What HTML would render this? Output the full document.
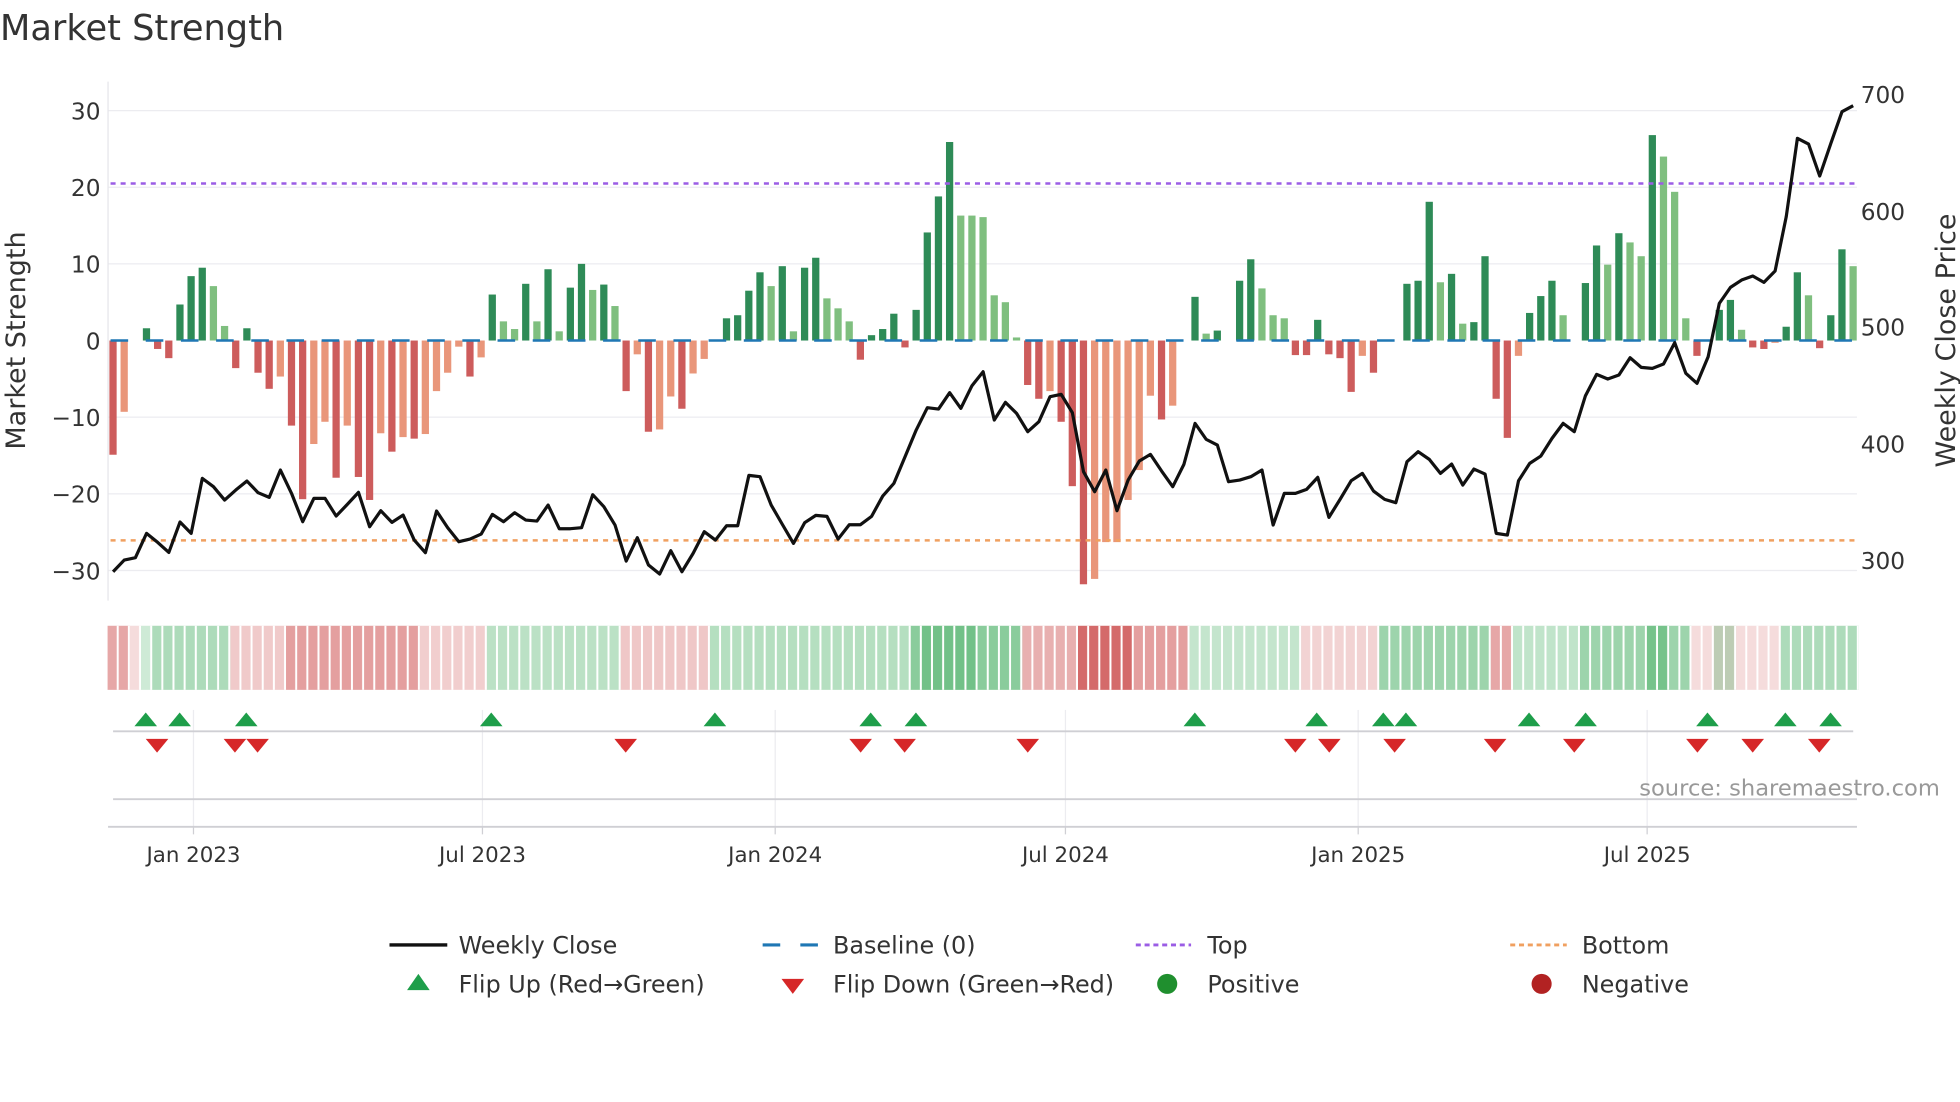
<!DOCTYPE html>
<html><head><meta charset="utf-8"><style>
html,body{margin:0;padding:0;background:#fff;width:1960px;height:1102px;overflow:hidden}
svg{display:block;font-family:"DejaVu Sans","Liberation Sans",sans-serif}
</style></head><body>
<svg width="1960" height="1102" viewBox="0 0 1560 877" preserveAspectRatio="none" xmlns="http://www.w3.org/2000/svg">
<defs>
<pattern id="gap" patternUnits="userSpaceOnUse" x="85.6" y="498" width="8.878" height="51"><rect x="7.3" y="0" width="1.6" height="51" fill="#fff"/></pattern>
</defs>
<rect width="1560" height="877" fill="#fff"/>
<text x="0" y="32" font-size="28" fill="#333">Market Strength</text>
<g stroke="#ececf0" stroke-width="1">
<line x1="86" y1="88" x2="1478" y2="88"/><line x1="86" y1="149" x2="1478" y2="149"/><line x1="86" y1="210" x2="1478" y2="210"/><line x1="86" y1="332" x2="1478" y2="332"/><line x1="86" y1="393" x2="1478" y2="393"/><line x1="86" y1="454" x2="1478" y2="454"/>
</g>
<line x1="86" y1="65" x2="86" y2="478" stroke="#e6e6ea"/>
<g font-size="18.5" fill="#333" text-anchor="end">
<text x="80" y="95">30</text><text x="80" y="156">20</text><text x="80" y="217">10</text><text x="80" y="278">0</text><text x="80" y="339">−10</text><text x="80" y="400">−20</text><text x="80" y="461">−30</text>
</g>
<g font-size="18.5" fill="#333">
<text x="1481" y="82">700</text><text x="1481" y="175">600</text><text x="1481" y="267">500</text><text x="1481" y="360">400</text><text x="1481" y="453">300</text>
</g>
<text transform="translate(20,271) rotate(-90)" font-size="21.5" fill="#333" text-anchor="middle">Market Strength</text>
<text transform="translate(1556,271) rotate(-90)" font-size="21.5" fill="#333" text-anchor="middle">Weekly Close Price</text>

<g transform="translate(90,271) scale(8.878,-6.1)">
<g fill="#cd5c5c">
<rect x="-0.33" y="-14.9" width="0.65" height="14.9"/>
<rect x="3.67" y="-1.1" width="0.65" height="1.1"/>
<rect x="4.67" y="-2.3" width="0.65" height="2.3"/>
<rect x="10.67" y="-3.6" width="0.65" height="3.6"/>
<rect x="12.67" y="-4.2" width="0.65" height="4.2"/>
<rect x="13.67" y="-6.3" width="0.65" height="6.3"/>
<rect x="15.67" y="-11.1" width="0.65" height="11.1"/>
<rect x="16.67" y="-20.7" width="0.65" height="20.7"/>
<rect x="19.67" y="-17.9" width="0.65" height="17.9"/>
<rect x="21.67" y="-17.8" width="0.65" height="17.8"/>
<rect x="22.67" y="-20.8" width="0.65" height="20.8"/>
<rect x="24.67" y="-14.5" width="0.65" height="14.5"/>
<rect x="26.67" y="-12.8" width="0.65" height="12.8"/>
<rect x="31.67" y="-4.7" width="0.65" height="4.7"/>
<rect x="45.67" y="-6.6" width="0.65" height="6.6"/>
<rect x="47.67" y="-11.9" width="0.65" height="11.9"/>
<rect x="50.67" y="-8.9" width="0.65" height="8.9"/>
<rect x="66.67" y="-2.5" width="0.65" height="2.5"/>
<rect x="70.67" y="-0.9" width="0.65" height="0.9"/>
<rect x="81.67" y="-5.8" width="0.65" height="5.8"/>
<rect x="82.67" y="-7.6" width="0.65" height="7.6"/>
<rect x="84.67" y="-10.6" width="0.65" height="10.6"/>
<rect x="85.67" y="-19" width="0.65" height="19"/>
<rect x="86.67" y="-31.8" width="0.65" height="31.8"/>
<rect x="93.67" y="-10.3" width="0.65" height="10.3"/>
<rect x="105.67" y="-1.9" width="0.65" height="1.9"/>
<rect x="106.67" y="-1.9" width="0.65" height="1.9"/>
<rect x="108.67" y="-1.8" width="0.65" height="1.8"/>
<rect x="109.67" y="-2.3" width="0.65" height="2.3"/>
<rect x="110.67" y="-6.7" width="0.65" height="6.7"/>
<rect x="112.67" y="-4.2" width="0.65" height="4.2"/>
<rect x="123.67" y="-7.6" width="0.65" height="7.6"/>
<rect x="124.67" y="-12.7" width="0.65" height="12.7"/>
<rect x="141.67" y="-2" width="0.65" height="2"/>
<rect x="146.67" y="-0.9" width="0.65" height="0.9"/>
<rect x="147.67" y="-1.1" width="0.65" height="1.1"/>
<rect x="152.67" y="-1" width="0.65" height="1"/>
</g>
<g fill="#e9967a">
<rect x="0.67" y="-9.3" width="0.65" height="9.3"/>
<rect x="14.67" y="-4.7" width="0.65" height="4.7"/>
<rect x="17.67" y="-13.5" width="0.65" height="13.5"/>
<rect x="18.67" y="-10.6" width="0.65" height="10.6"/>
<rect x="20.67" y="-11.1" width="0.65" height="11.1"/>
<rect x="23.67" y="-12.1" width="0.65" height="12.1"/>
<rect x="25.67" y="-12.6" width="0.65" height="12.6"/>
<rect x="27.67" y="-12.2" width="0.65" height="12.2"/>
<rect x="28.67" y="-6.6" width="0.65" height="6.6"/>
<rect x="29.67" y="-4.2" width="0.65" height="4.2"/>
<rect x="30.67" y="-0.8" width="0.65" height="0.8"/>
<rect x="32.67" y="-2.2" width="0.65" height="2.2"/>
<rect x="46.67" y="-1.8" width="0.65" height="1.8"/>
<rect x="48.67" y="-11.6" width="0.65" height="11.6"/>
<rect x="49.67" y="-7.3" width="0.65" height="7.3"/>
<rect x="51.67" y="-4.3" width="0.65" height="4.3"/>
<rect x="52.67" y="-2.4" width="0.65" height="2.4"/>
<rect x="83.67" y="-6.6" width="0.65" height="6.6"/>
<rect x="87.67" y="-31.1" width="0.65" height="31.1"/>
<rect x="88.67" y="-26.3" width="0.65" height="26.3"/>
<rect x="89.67" y="-26.3" width="0.65" height="26.3"/>
<rect x="90.67" y="-20.8" width="0.65" height="20.8"/>
<rect x="91.67" y="-16.9" width="0.65" height="16.9"/>
<rect x="92.67" y="-7.2" width="0.65" height="7.2"/>
<rect x="94.67" y="-8.5" width="0.65" height="8.5"/>
<rect x="111.67" y="-2" width="0.65" height="2"/>
<rect x="125.67" y="-2" width="0.65" height="2"/>
<rect x="148.67" y="-0.3" width="0.65" height="0.3"/>
</g>
<g fill="#2e8b57">
<rect x="2.67" y="0" width="0.65" height="1.6"/>
<rect x="5.67" y="0" width="0.65" height="4.7"/>
<rect x="6.67" y="0" width="0.65" height="8.4"/>
<rect x="7.67" y="0" width="0.65" height="9.5"/>
<rect x="11.67" y="0" width="0.65" height="1.6"/>
<rect x="33.67" y="0" width="0.65" height="6"/>
<rect x="36.67" y="0" width="0.65" height="7.4"/>
<rect x="38.67" y="0" width="0.65" height="9.3"/>
<rect x="40.67" y="0" width="0.65" height="6.9"/>
<rect x="41.67" y="0" width="0.65" height="10"/>
<rect x="43.67" y="0" width="0.65" height="7.3"/>
<rect x="54.67" y="0" width="0.65" height="2.9"/>
<rect x="55.67" y="0" width="0.65" height="3.3"/>
<rect x="56.67" y="0" width="0.65" height="6.5"/>
<rect x="57.67" y="0" width="0.65" height="8.9"/>
<rect x="59.67" y="0" width="0.65" height="9.7"/>
<rect x="61.67" y="0" width="0.65" height="9.5"/>
<rect x="62.67" y="0" width="0.65" height="10.8"/>
<rect x="67.67" y="0" width="0.65" height="0.7"/>
<rect x="68.67" y="0" width="0.65" height="1.5"/>
<rect x="69.67" y="0" width="0.65" height="3.5"/>
<rect x="71.67" y="0" width="0.65" height="4"/>
<rect x="72.67" y="0" width="0.65" height="14.1"/>
<rect x="73.67" y="0" width="0.65" height="18.8"/>
<rect x="74.67" y="0" width="0.65" height="25.9"/>
<rect x="96.67" y="0" width="0.65" height="5.7"/>
<rect x="98.67" y="0" width="0.65" height="1.3"/>
<rect x="100.67" y="0" width="0.65" height="7.8"/>
<rect x="101.67" y="0" width="0.65" height="10.6"/>
<rect x="107.67" y="0" width="0.65" height="2.7"/>
<rect x="115.67" y="0" width="0.65" height="7.4"/>
<rect x="116.67" y="0" width="0.65" height="7.8"/>
<rect x="117.67" y="0" width="0.65" height="18.1"/>
<rect x="119.67" y="0" width="0.65" height="8.7"/>
<rect x="121.67" y="0" width="0.65" height="2.4"/>
<rect x="122.67" y="0" width="0.65" height="11"/>
<rect x="126.67" y="0" width="0.65" height="3.6"/>
<rect x="127.67" y="0" width="0.65" height="5.8"/>
<rect x="128.67" y="0" width="0.65" height="7.8"/>
<rect x="131.67" y="0" width="0.65" height="7.5"/>
<rect x="132.67" y="0" width="0.65" height="12.4"/>
<rect x="134.67" y="0" width="0.65" height="14"/>
<rect x="137.67" y="0" width="0.65" height="26.8"/>
<rect x="143.67" y="0" width="0.65" height="4"/>
<rect x="144.67" y="0" width="0.65" height="5.3"/>
<rect x="149.67" y="0" width="0.65" height="1.8"/>
<rect x="150.67" y="0" width="0.65" height="8.9"/>
<rect x="153.67" y="0" width="0.65" height="3.3"/>
<rect x="154.67" y="0" width="0.65" height="11.9"/>
</g>
<g fill="#7fbf7f">
<rect x="8.67" y="0" width="0.65" height="7.1"/>
<rect x="9.67" y="0" width="0.65" height="1.9"/>
<rect x="34.67" y="0" width="0.65" height="2.5"/>
<rect x="35.67" y="0" width="0.65" height="1.5"/>
<rect x="37.67" y="0" width="0.65" height="2.5"/>
<rect x="39.67" y="0" width="0.65" height="1.2"/>
<rect x="42.67" y="0" width="0.65" height="6.6"/>
<rect x="44.67" y="0" width="0.65" height="4.5"/>
<rect x="58.67" y="0" width="0.65" height="7.1"/>
<rect x="60.67" y="0" width="0.65" height="1.2"/>
<rect x="63.67" y="0" width="0.65" height="5.5"/>
<rect x="64.67" y="0" width="0.65" height="4.2"/>
<rect x="65.67" y="0" width="0.65" height="2.5"/>
<rect x="75.67" y="0" width="0.65" height="16.3"/>
<rect x="76.67" y="0" width="0.65" height="16.3"/>
<rect x="77.67" y="0" width="0.65" height="16.1"/>
<rect x="78.67" y="0" width="0.65" height="5.9"/>
<rect x="79.67" y="0" width="0.65" height="5"/>
<rect x="80.67" y="0" width="0.65" height="0.4"/>
<rect x="97.67" y="0" width="0.65" height="0.9"/>
<rect x="102.67" y="0" width="0.65" height="6.8"/>
<rect x="103.67" y="0" width="0.65" height="3.3"/>
<rect x="104.67" y="0" width="0.65" height="2.9"/>
<rect x="118.67" y="0" width="0.65" height="7.6"/>
<rect x="120.67" y="0" width="0.65" height="2.2"/>
<rect x="129.67" y="0" width="0.65" height="3.3"/>
<rect x="133.67" y="0" width="0.65" height="9.9"/>
<rect x="135.67" y="0" width="0.65" height="12.8"/>
<rect x="136.67" y="0" width="0.65" height="11"/>
<rect x="138.67" y="0" width="0.65" height="24"/>
<rect x="139.67" y="0" width="0.65" height="19.4"/>
<rect x="140.67" y="0" width="0.65" height="2.9"/>
<rect x="145.67" y="0" width="0.65" height="1.4"/>
<rect x="151.67" y="0" width="0.65" height="5.9"/>
<rect x="155.67" y="0" width="0.65" height="9.7"/>
</g>
</g>

<line x1="88" y1="271" x2="1478" y2="271" stroke="#1f77b4" stroke-width="2" stroke-dasharray="14 14"/>
<line x1="88" y1="146" x2="1478" y2="146" stroke="#9b5de5" stroke-width="2" stroke-dasharray="4 4"/>
<line x1="88" y1="430" x2="1478" y2="430" stroke="#f0a060" stroke-width="2" stroke-dasharray="4 4"/>

<g transform="translate(90,71.63) scale(8.878,0.2653)">
<polyline fill="none" stroke="#111" stroke-width="3.2" stroke-linejoin="round" vector-effect="non-scaling-stroke" points="0,1445 1,1410 2,1403 3,1330 4,1357 5,1387 6,1296 7,1330 8,1165 9,1190 10,1230 11,1200 12,1173 13,1208 14,1222 15,1140 16,1210 17,1295 18,1225 19,1225 20,1278 21,1243 22,1207 23,1310 24,1262 25,1297 26,1275 27,1350 28,1388 29,1263 30,1313 31,1355 32,1347 33,1332 34,1273 35,1295 36,1268 37,1290 38,1293 39,1245 40,1316 41,1316 42,1313 43,1214 44,1250 45,1305 46,1413 47,1343 48,1425 49,1452 50,1382 51,1445 52,1390 53,1325 54,1350 55,1307 56,1307 57,1156 58,1160 59,1245 60,1303 61,1360 62,1298 63,1276 64,1279 65,1347 66,1304 67,1304 68,1279 69,1218 70,1180 71,1100 72,1020 73,953 74,957 75,908 76,955 77,887 78,845 79,990 80,937 81,970 82,1025 83,995 84,920 85,913 86,968 87,1145 88,1205 89,1140 90,1262 91,1170 92,1113 93,1093 94,1143 95,1190 96,1123 97,1000 98,1048 99,1065 100,1175 101,1170 102,1160 103,1140 104,1305 105,1210 106,1210 107,1198 108,1162 109,1282 110,1228 111,1172 112,1150 113,1203 114,1228 115,1238 116,1115 117,1085 118,1108 119,1150 120,1122 121,1185 122,1137 123,1152 124,1330 125,1335 126,1172 127,1120 128,1098 129,1045 130,1000 131,1025 132,917 133,853 134,867 135,855 136,803 137,832 138,835 139,822 140,758 141,850 142,880 143,800 144,640 145,592 146,570 147,558 148,577 149,543 150,380 151,145 152,162 153,258 154,160 155,65 156,47"/>
</g>

<g transform="translate(85.6,498) scale(8.878,1)">
<rect x="0" y="0" width="2" height="51" fill="rgba(205,80,80,0.5)"/>
<rect x="2" y="0" width="1" height="51" fill="rgba(205,80,80,0.2)"/>
<rect x="3" y="0" width="1" height="51" fill="rgba(60,170,90,0.25)"/>
<rect x="4" y="0" width="7" height="51" fill="rgba(60,170,90,0.42)"/>
<rect x="11" y="0" width="5" height="51" fill="rgba(205,80,80,0.3)"/>
<rect x="16" y="0" width="12" height="51" fill="rgba(205,80,80,0.55)"/>
<rect x="28" y="0" width="6" height="51" fill="rgba(205,80,80,0.28)"/>
<rect x="34" y="0" width="12" height="51" fill="rgba(60,170,90,0.35)"/>
<rect x="46" y="0" width="8" height="51" fill="rgba(205,80,80,0.32)"/>
<rect x="54" y="0" width="18" height="51" fill="rgba(60,170,90,0.38)"/>
<rect x="72" y="0" width="10" height="51" fill="rgba(60,170,90,0.6)"/>
<rect x="73" y="0" width="5" height="51" fill="rgba(60,170,90,0.3)"/>
<rect x="82" y="0" width="5" height="51" fill="rgba(205,80,80,0.45)"/>
<rect x="87" y="0" width="5" height="51" fill="rgba(205,80,80,0.85)"/>
<rect x="92" y="0" width="5" height="51" fill="rgba(205,80,80,0.55)"/>
<rect x="97" y="0" width="10" height="51" fill="rgba(60,170,90,0.3)"/>
<rect x="107" y="0" width="7" height="51" fill="rgba(205,80,80,0.25)"/>
<rect x="114" y="0" width="10" height="51" fill="rgba(60,170,90,0.5)"/>
<rect x="124" y="0" width="2" height="51" fill="rgba(205,80,80,0.5)"/>
<rect x="126" y="0" width="6" height="51" fill="rgba(60,170,90,0.32)"/>
<rect x="132" y="0" width="10" height="51" fill="rgba(60,170,90,0.5)"/>
<rect x="138" y="0" width="2" height="51" fill="rgba(60,170,90,0.4)"/>
<rect x="142" y="0" width="8" height="51" fill="rgba(205,80,80,0.2)"/>
<rect x="144" y="0" width="2" height="51" fill="rgba(60,170,90,0.3)"/>
<rect x="150" y="0" width="7" height="51" fill="rgba(60,170,90,0.42)"/>
</g>
<rect x="85.6" y="498" width="1394" height="51" fill="url(#gap)"/>

<g stroke="#ececf0"><line x1="154" y1="565" x2="154" y2="658"/><line x1="384" y1="565" x2="384" y2="658"/><line x1="617" y1="565" x2="617" y2="658"/><line x1="848" y1="565" x2="848" y2="658"/><line x1="1081" y1="565" x2="1081" y2="658"/><line x1="1311" y1="565" x2="1311" y2="658"/></g>
<line x1="90" y1="582" x2="1475" y2="582" stroke="#cfcfd4" stroke-width="1.5"/>
<line x1="90" y1="636" x2="1478" y2="636" stroke="#cfcfd4" stroke-width="1.5"/>
<line x1="86" y1="658" x2="1478" y2="658" stroke="#cfcfd4" stroke-width="1.5"/>
<g stroke="#cfcfd4"><line x1="154" y1="658" x2="154" y2="664"/><line x1="384" y1="658" x2="384" y2="664"/><line x1="617" y1="658" x2="617" y2="664"/><line x1="848" y1="658" x2="848" y2="664"/><line x1="1081" y1="658" x2="1081" y2="664"/><line x1="1311" y1="658" x2="1311" y2="664"/></g>

<g fill="#1e9e4a">
<polygon points="107,578 125,578 116,567"/><polygon points="134,578 152,578 143,567"/><polygon points="187,578 205,578 196,567"/><polygon points="382,578 400,578 391,567"/><polygon points="560,578 578,578 569,567"/><polygon points="684,578 702,578 693,567"/><polygon points="720,578 738,578 729,567"/><polygon points="942,578 960,578 951,567"/><polygon points="1039,578 1057,578 1048,567"/><polygon points="1092,578 1110,578 1101,567"/><polygon points="1110,578 1128,578 1119,567"/><polygon points="1208,578 1226,578 1217,567"/><polygon points="1253,578 1271,578 1262,567"/><polygon points="1350,578 1368,578 1359,567"/><polygon points="1412,578 1430,578 1421,567"/><polygon points="1448,578 1466,578 1457,567"/>
</g>
<g fill="#d62728">
<polygon points="116,588 134,588 125,599"/><polygon points="178,588 196,588 187,599"/><polygon points="196,588 214,588 205,599"/><polygon points="489,588 507,588 498,599"/><polygon points="676,588 694,588 685,599"/><polygon points="711,588 729,588 720,599"/><polygon points="809,588 827,588 818,599"/><polygon points="1022,588 1040,588 1031,599"/><polygon points="1049,588 1067,588 1058,599"/><polygon points="1101,588 1119,588 1110,599"/><polygon points="1181,588 1199,588 1190,599"/><polygon points="1244,588 1262,588 1253,599"/><polygon points="1342,588 1360,588 1351,599"/><polygon points="1386,588 1404,588 1395,599"/><polygon points="1439,588 1457,588 1448,599"/>
</g>

<text x="1544" y="633" font-size="18" fill="#999" text-anchor="end">source: sharemaestro.com</text>
<g font-size="17" fill="#333" text-anchor="middle">
<text x="154" y="686">Jan 2023</text><text x="384" y="686">Jul 2023</text><text x="617" y="686">Jan 2024</text><text x="848" y="686">Jul 2024</text><text x="1081" y="686">Jan 2025</text><text x="1311" y="686">Jul 2025</text>
</g>
<g font-size="19" fill="#333">
<line x1="310" y1="752" x2="356" y2="752" stroke="#111" stroke-width="2.6"/><text x="365" y="759">Weekly Close</text>
<line x1="607" y1="752" x2="651" y2="752" stroke="#1f77b4" stroke-width="2.4" stroke-dasharray="14 16"/><text x="663" y="759">Baseline (0)</text>
<line x1="904" y1="752" x2="948" y2="752" stroke="#9b5de5" stroke-width="2.2" stroke-dasharray="4 3"/><text x="961" y="759">Top</text>
<line x1="1202" y1="752" x2="1247" y2="752" stroke="#f0a060" stroke-width="2.2" stroke-dasharray="4 3"/><text x="1259" y="759">Bottom</text>
<polygon points="324,788 342,788 333,775" fill="#1e9e4a"/><text x="365" y="790">Flip Up (Red→Green)</text>
<polygon points="622,779 640,779 631,791" fill="#d62728"/><text x="663" y="790">Flip Down (Green→Red)</text>
<circle cx="929" cy="783" r="8" fill="#1f8f2e"/><text x="961" y="790">Positive</text>
<circle cx="1227" cy="783" r="8" fill="#b22222"/><text x="1259" y="790">Negative</text>
</g>
</svg>
</body></html>
